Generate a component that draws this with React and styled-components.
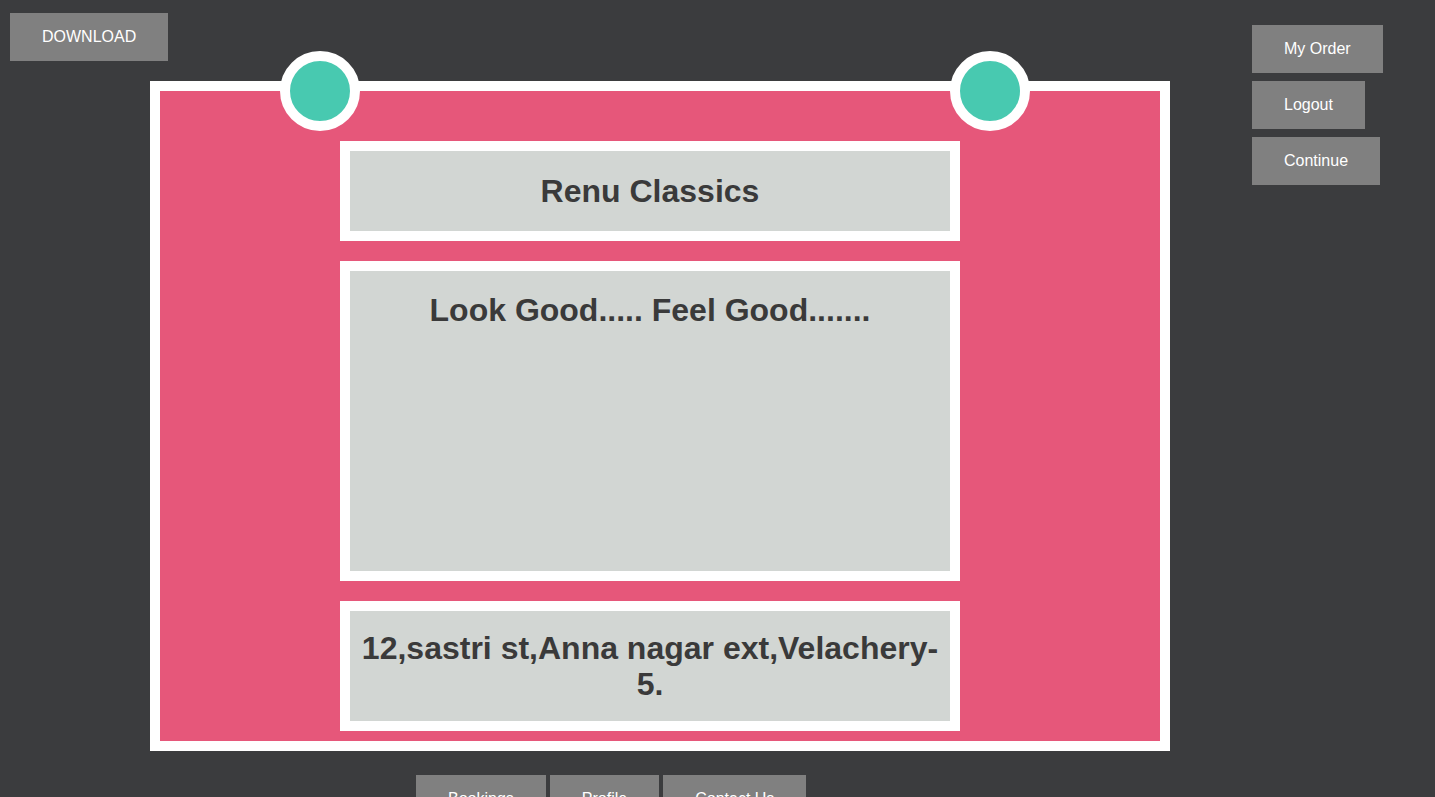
import React from "react";
import styled, { createGlobalStyle } from "styled-components";

const GlobalStyle = createGlobalStyle`
  html, body {
    margin: 0;
    padding: 0;
    background: #3b3c3e;
    font-family: "Liberation Sans", Arial, sans-serif;
  }
  html {
    overflow-y: scroll;
  }
  ::-webkit-scrollbar {
    width: 12px;
    background: #f1f1f1;
  }
  ::-webkit-scrollbar-thumb {
    background: #a8a8a8;
    border-left: 2px solid #f1f1f1;
    border-top: 12px solid #f1f1f1;
    background-clip: padding-box;
  }
`;

const Page = styled.div`
  display: flex;
  align-items: flex-start;
  min-height: 900px;
`;

const MainColumn = styled.div`
  width: 1252px;
  flex-shrink: 0;
  display: flex;
  flex-direction: column;
  align-items: flex-start;
`;

const SideColumn = styled.div`
  display: flex;
  flex-direction: column;
  align-items: flex-start;
  gap: 8px;
  padding-top: 25px;
`;

const Button = styled.button`
  background: #808080;
  color: #fff;
  border: none;
  font-family: "Liberation Sans", Arial, sans-serif;
  font-size: 16px;
  line-height: 18px;
  padding: 15px 32px;
  cursor: pointer;
  text-transform: ${(p) => (p.upper ? "uppercase" : "none")};
`;

const DownloadButton = styled(Button)`
  margin: 13px 0 0 10px;
`;

const Card = styled.div`
  position: relative;
  margin: 20px 0 0 150px;
  width: 1020px;
  box-sizing: border-box;
  background: #e6577a;
  border: 10px solid #fff;
  padding: 50px 0 10px 180px;
  display: flex;
  flex-direction: column;
  gap: 20px;
`;

const Pin = styled.div`
  position: absolute;
  top: -40px;
  left: ${(p) => p.left}px;
  width: 60px;
  height: 60px;
  border-radius: 50%;
  background: #48c9b0;
  border: 10px solid #fff;
`;

const Panel = styled.div`
  width: 600px;
  height: ${(p) => p.h}px;
  background: #d2d6d3;
  border: 10px solid #fff;
  display: flex;
  flex-direction: column;
  align-items: center;
  justify-content: ${(p) => (p.top ? "flex-start" : "center")};
  padding-top: ${(p) => (p.top ? "21px" : "0")};
  box-sizing: content-box;
`;

const Title = styled.h1`
  margin: 0;
  font-size: 32px;
  font-weight: bold;
  color: #3a3a3a;
  text-align: center;
  line-height: 36px;
`;

const BottomNav = styled.div`
  display: flex;
  gap: 4px;
  margin: 24px 0 0 416px;
`;

export default function App() {
  return (
    <>
      <GlobalStyle />
      <Page>
        <MainColumn>
          <DownloadButton upper>Download</DownloadButton>
          <Card>
            <Pin left={120} />
            <Pin left={790} />
            <Panel h={80}>
              <Title>Renu Classics</Title>
            </Panel>
            <Panel h={279} top>
              <Title>Look Good..... Feel Good.......</Title>
            </Panel>
            <Panel h={110}>
              <Title>12,sastri st,Anna nagar ext,Velachery-5.</Title>
            </Panel>
          </Card>
          <BottomNav>
            <Button>Bookings</Button>
            <Button>Profile</Button>
            <Button>Contact Us</Button>
          </BottomNav>
        </MainColumn>
        <SideColumn>
          <Button>My Order</Button>
          <Button>Logout</Button>
          <Button>Continue</Button>
        </SideColumn>
      </Page>
    </>
  );
}
